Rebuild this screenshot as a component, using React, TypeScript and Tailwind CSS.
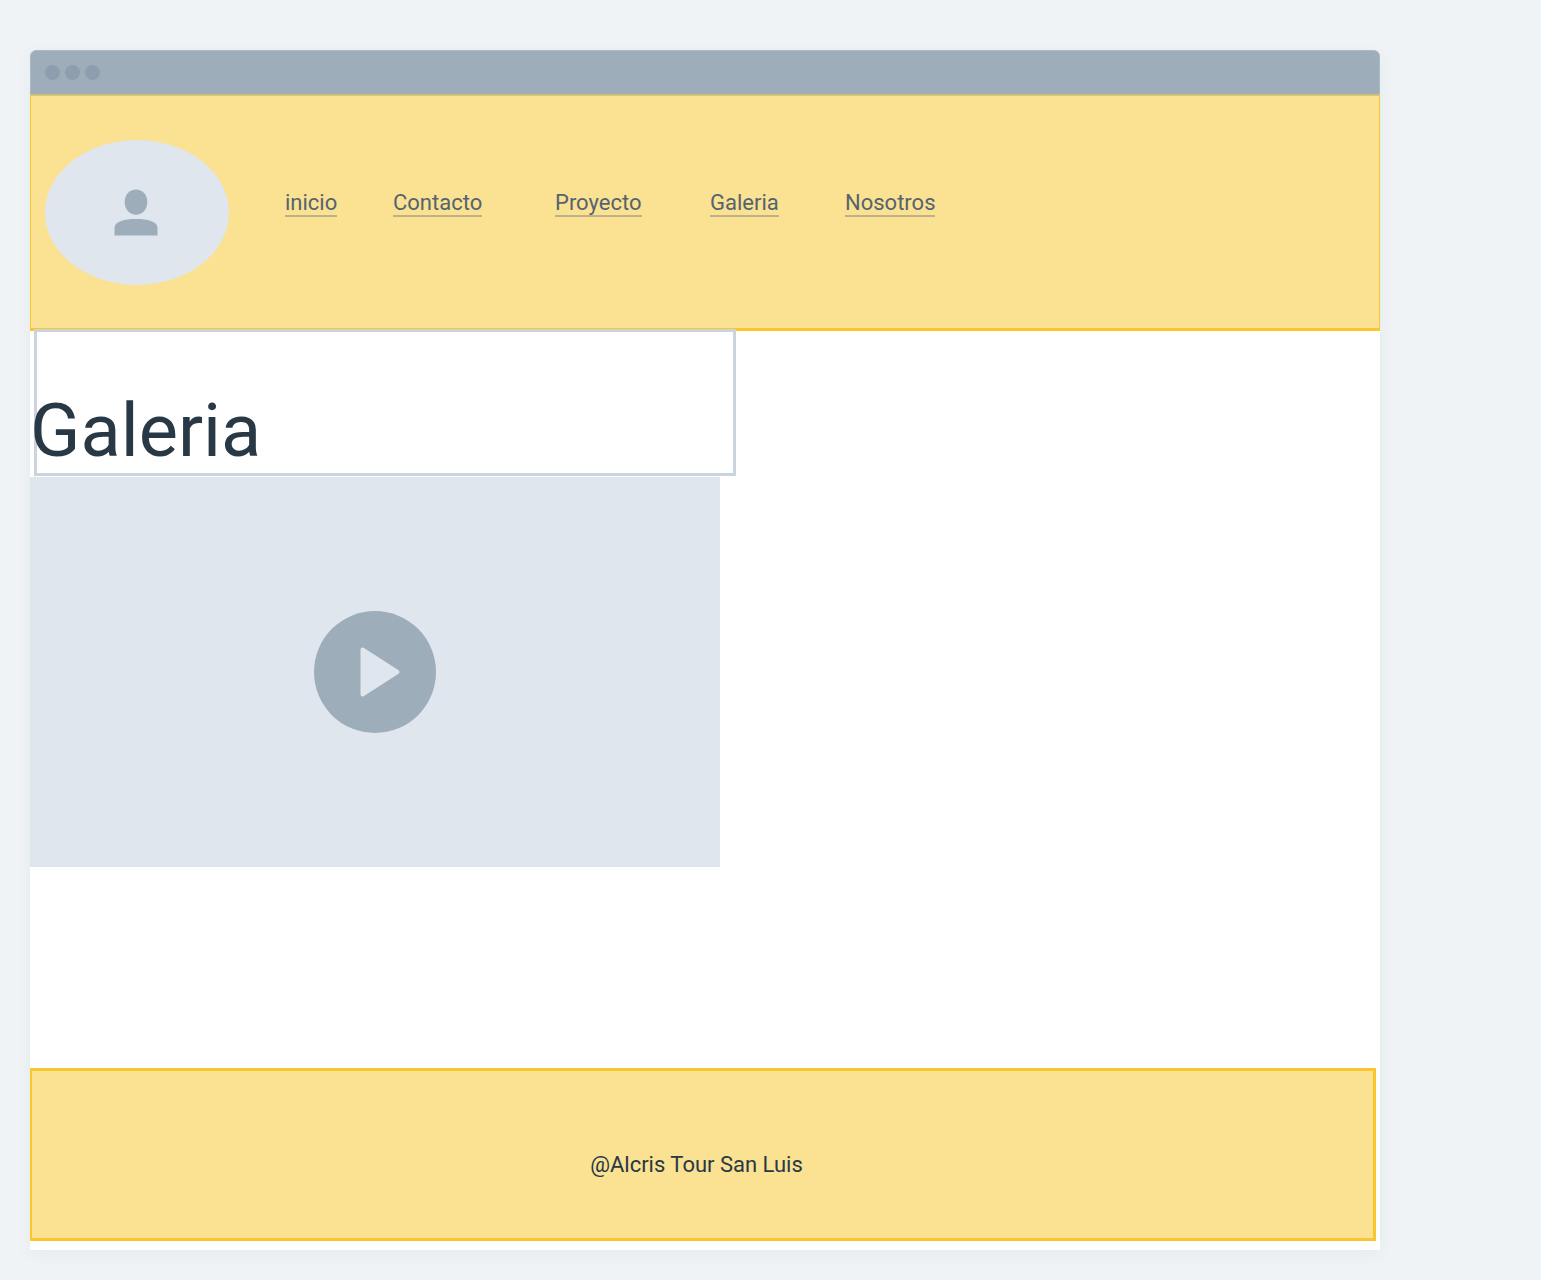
const links = ['inicio', 'Contacto', 'Proyecto', 'Galeria', 'Nosotros'];

function TitleBar() {
  return (
    <div className="flex h-[45px] items-center gap-[5px] rounded-t-md border border-[#adbac5] bg-[#9eadba] px-3.5">
      <span className="size-[15px] rounded-full bg-[#8e9eae]" />
      <span className="size-[15px] rounded-full bg-[#8e9eae]" />
      <span className="size-[15px] rounded-full bg-[#8e9eae]" />
    </div>
  );
}

function Avatar() {
  return (
    <div className="flex h-[145px] w-[184px] shrink-0 items-center justify-center rounded-[50%] bg-[#dfe6ee]">
      <svg width="46" height="48" viewBox="0 0 46 48" fill="#9eadba" aria-label="Usuario" role="img">
        <path d="M22 1.500C28.500 1.500 33.300 6.500 33.300 14C33.300 21.500 28.500 26.800 22 26.800C15.500 26.800 10.700 21.500 10.700 14C10.700 6.500 15.500 1.500 22 1.500Z" />
        <path d="M0.500 47.500V39.500C0.500 33.500 11 31 22 31C33 31 43.500 33.500 43.500 39.500V47.500Z" />
      </svg>
    </div>
  );
}

function Header() {
  return (
    <header className="flex h-[236px] items-center gap-14 border border-b-[3px] border-[#fac62f] bg-[#fbe192] pl-3.5">
      <Avatar />
      <nav className="grid grid-cols-[108px_162px_155px_135px_auto] pb-4">
        {links.map((link) => (
          <a
            key={link}
            href={`#${link.toLowerCase()}`}
            className="w-fit border-b-2 border-[#bfb28a] text-[22px] leading-[24px] text-[#54646f]"
          >
            {link}
          </a>
        ))}
      </nav>
    </header>
  );
}

function Video() {
  return (
    <section className="mt-px flex h-[390px] w-[690px] max-w-full items-center justify-center bg-[#dfe6ee]">
      <button type="button" aria-label="Reproducir" className="size-[122px] rounded-full bg-[#9eadba]">
        <svg width="122" height="122" viewBox="0 0 122 122">
          <path
            d="M48.500 38.500V83.500L83.500 61Z"
            fill="#dfe6ee"
            stroke="#dfe6ee"
            strokeWidth="4"
            strokeLinejoin="round"
          />
        </svg>
      </button>
    </section>
  );
}

export default function App() {
  return (
    <div className="min-h-screen bg-[#eff3f6] pt-[50px] pr-[161px] pb-[30px] pl-[30px] font-['Roboto',sans-serif]">
      <div className="rounded-t-md bg-white pb-[9px] shadow-[0_4px_16px_rgba(40,70,80,0.05)]">
        <TitleBar />
        <Header />
        <main className="pb-[201px]">
          <div className="relative -mt-0.5 ml-1 flex h-[147px] w-[702px] max-w-full items-end border-[3px] border-[#cad4de]">
            <h1 className="-ml-[7px] text-[74px] leading-[84px] text-[#293845]">Galeria</h1>
          </div>
          <Video />
        </main>
        <footer className="mr-1 flex h-[173px] items-center justify-center border-[3px] border-l-2 border-[#fac62f] bg-[#fbe192] pt-5 pr-3 text-[22px] leading-[26px] text-[#293845]">
          @Alcris Tour San Luis
        </footer>
      </div>
    </div>
  );
}
